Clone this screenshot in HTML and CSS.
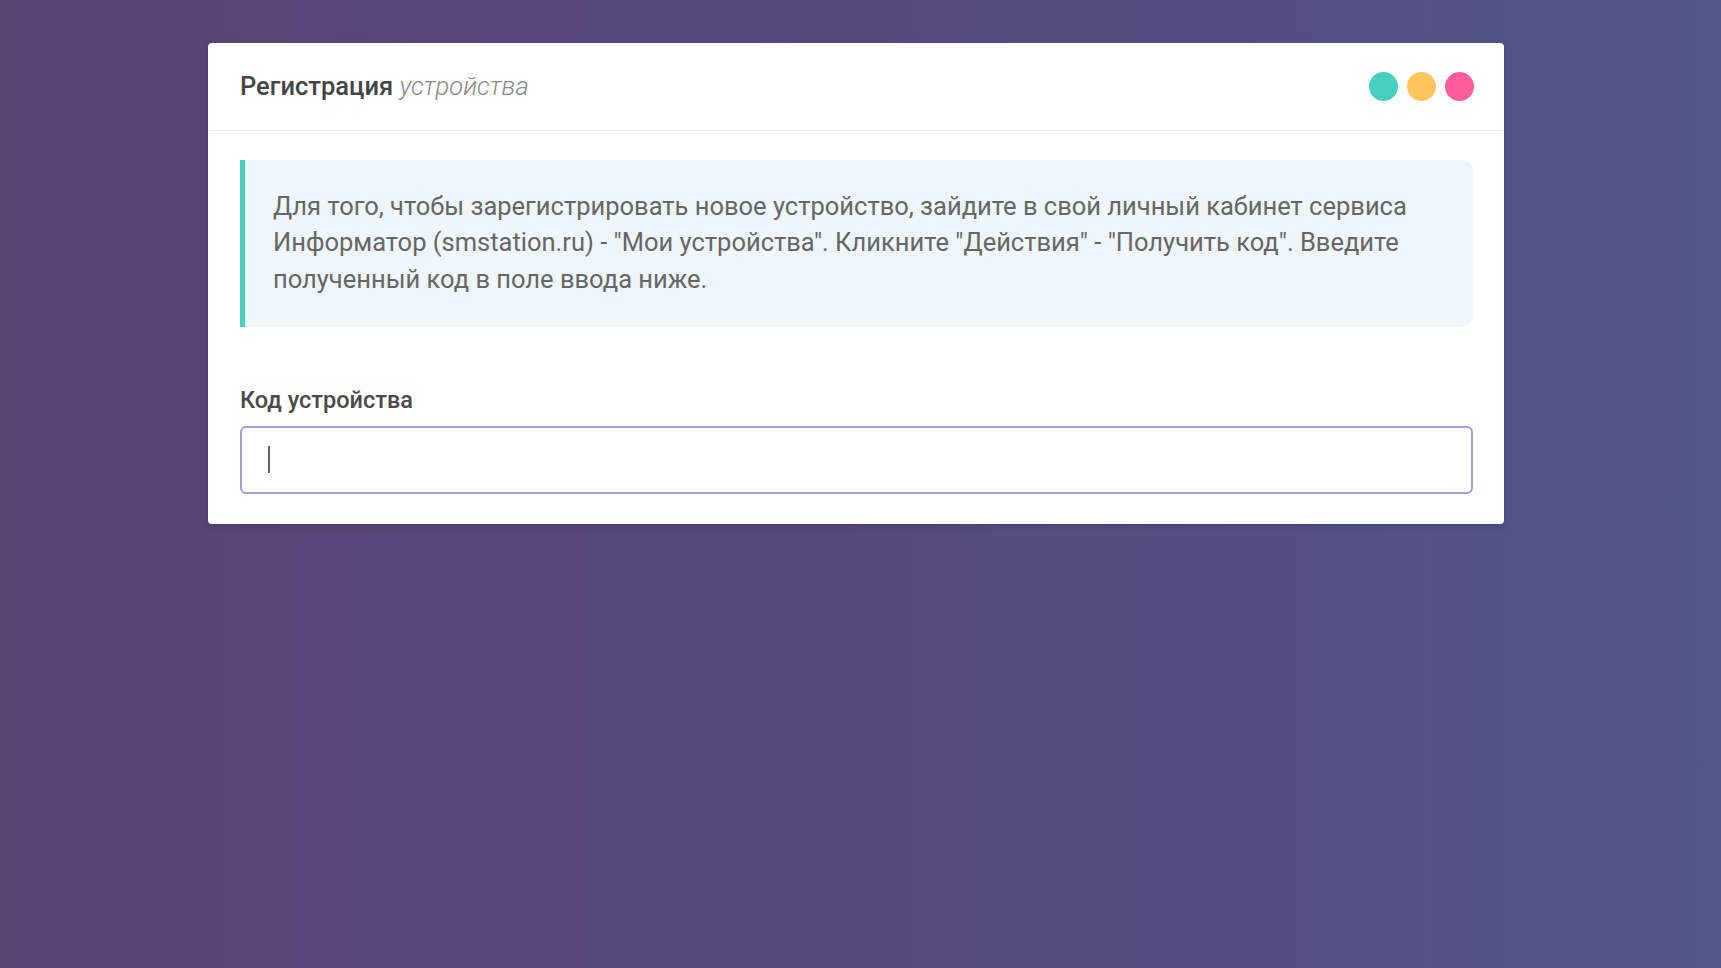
FILE: index.html
```html
<!DOCTYPE html>
<html lang="ru">
<head>
<meta charset="utf-8">
<title>Регистрация устройства</title>
<link rel="stylesheet" href="styles.css">
</head>
<body>
<div class="page">
  <div class="card">
    <div class="card-header">
      <div class="title"><b>Регистрация</b> <i>устройства</i></div>
      <div class="dots">
        <span class="dot dot-teal"></span>
        <span class="dot dot-yellow"></span>
        <span class="dot dot-pink"></span>
      </div>
    </div>
    <div class="card-body">
      <div class="note">Для того, чтобы зарегистрировать новое устройство, зайдите в свой личный кабинет сервиса Информатор (smstation.ru) - "Мои устройства". Кликните "Действия" - "Получить код". Введите полученный код в поле ввода ниже.</div>
      <label class="label">Код устройства</label>
      <div class="input"><span class="caret"></span></div>
    </div>
  </div>
</div>
</body>
</html>
```
FILE: styles.css
```css
html, body {
  margin: 0;
  height: 100%;
}
body {
  background: linear-gradient(to right, #5b4374 0%, #56497c 45%, #52558a 100%);
  font-family: Roboto, "Noto Sans", sans-serif;
}
.page {
  padding: 43px 0 0 208px;
}
.card {
  width: 1296px;
  background: #fff;
  border-radius: 4px;
  box-shadow: 0 2px 6px rgba(0,0,0,0.15);
}
.card-header {
  height: 87px;
  border-bottom: 1px solid #eef0f2;
  display: flex;
  align-items: center;
  justify-content: space-between;
  padding: 0 30px 0 32px;
}
.title {
  font-size: 25.5px;
  color: #444;
  margin-top: -2px;
}
.title b {
  font-weight: 500;
}
.title i {
  font-weight: 300;
  color: #888;
}
.dots {
  display: flex;
  gap: 9px;
}
.dot {
  width: 29px;
  height: 29px;
  border-radius: 50%;
}
.dot-teal { background: #47d0c0; }
.dot-yellow { background: #ffc65e; }
.dot-pink { background: #ff5c9c; }
.card-body {
  padding: 29px 31px 30px 32px;
}
.note {
  background: #eff6fc;
  border-left: 5px solid #47d0c0;
  border-radius: 0 12px 12px 0;
  padding: 28px 30px 30px 28px;
  font-size: 25.5px;
  line-height: 36.3px;
  color: #666;
}
.label {
  display: block;
  margin-top: 59px;
  font-size: 23.5px;
  font-weight: 500;
  color: #4a4a4a;
}
.input {
  margin-top: 12px;
  height: 64px;
  border: 2px solid #a49cd2;
  border-radius: 6px;
  display: flex;
  align-items: center;
  padding-left: 26px;
}
.caret {
  width: 2px;
  height: 27px;
  background: #666;
}
```
